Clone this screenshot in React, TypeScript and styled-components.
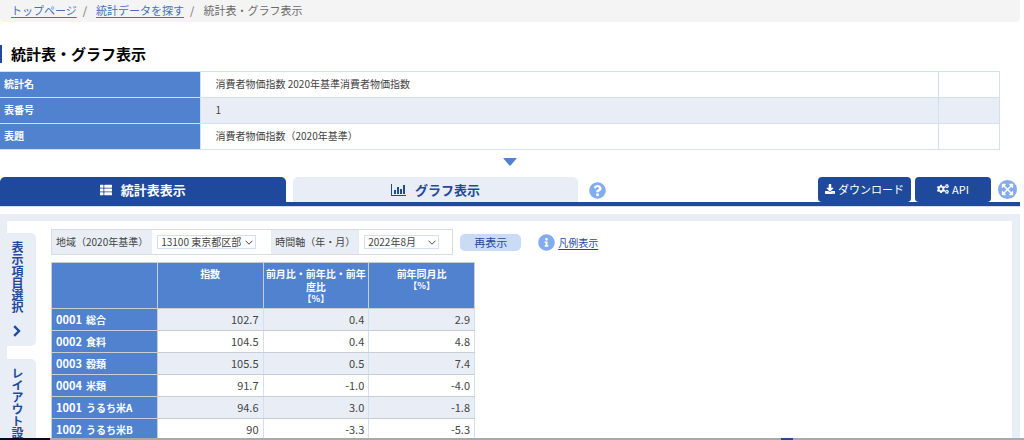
import React from "react";
import styled, { createGlobalStyle } from "styled-components";
import {
  FaThList,
  FaCogs,
  FaDownload,
  FaQuestionCircle,
  FaInfoCircle,
  FaExpandArrowsAlt,
} from "react-icons/fa";

const color = {
  navy: "#1f4a9b",
  link: "#4470bd",
  blue: "#5082d0",
  sky: "#82acec",
  pale: "#e9eef6",
  line: "#d3e0f4",
  grid: "#c9cdd4",
  text: "#444",
};

const GlobalStyle = createGlobalStyle`
  *, *::before, *::after { box-sizing: border-box; }
  body {
    margin: 0;
    background: #fff;
    color: ${color.text};
    font-family: "Noto Sans CJK JP", "Liberation Sans", sans-serif;
    font-size: 10px;
    line-height: 14px;
  }
  button, select { font: inherit; color: inherit; margin: 0; }
`;

const Screen = styled.div`
  display: flex;
  flex-direction: column;
  height: 100vh;
  overflow: hidden;
`;

const Page = styled.main`
  display: flex;
  flex-direction: column;
  flex: 1;
  min-height: 0;
  padding-right: 4px;
  overflow: hidden;
`;

const Breadcrumb = styled.nav`
  flex: none;
  height: 22px;
  padding: 2px 11px 0;
  background: #f4f4f4;
  border-radius: 0 0 4px 4px;
  font-size: 11px;
  line-height: 17px;
  color: #6b6b6b;

  ol {
    display: flex;
    margin: 0;
    padding: 0;
    list-style: none;
  }
  li + li::before {
    content: "/";
    padding: 0 9px 0 6px;
  }
  a {
    color: ${color.link};
    text-underline-offset: 2px;
  }
`;

const Title = styled.h1`
  flex: none;
  margin: 23px 0 8px;
  padding-left: 9px;
  border-left: 2px solid ${color.navy};
  color: #000;
  font-size: 15px;
  font-weight: 700;
  line-height: 18px;
`;

const InfoTable = styled.table`
  flex: none;
  width: calc(100% - 20px);
  border-collapse: collapse;
  table-layout: fixed;

  th,
  td {
    height: 26px;
    padding: 0 15px 2px;
    border: 1px solid ${color.line};
    text-align: left;
  }
  th {
    width: 200px;
    padding: 0 4px 2px;
    border-left: 0;
    background: ${color.blue};
    color: #fff;
  }
  td:last-child {
    width: 61px;
  }
  tr:nth-child(even) td {
    background: ${color.pale};
  }
`;

const Collapse = styled.button`
  flex: none;
  align-self: center;
  display: block;
  height: 27px;
  padding: 0 0 4px;
  border: 0;
  background: none;
  line-height: 0;
`;

const TabBar = styled.div`
  flex: none;
  display: flex;
  align-items: flex-end;
  border-bottom: 4px solid ${color.navy};
  box-shadow: 0 1px 0 ${color.line};
`;

const Tab = styled.button<{ $active?: boolean }>`
  display: flex;
  align-items: center;
  justify-content: center;
  gap: 9px;
  width: 28%;
  height: 25px;
  margin-right: 7px;
  padding: 0;
  border: 0;
  border-radius: 5px 5px 0 0;
  background: ${(p) => (p.$active ? color.navy : color.pale)};
  color: ${(p) => (p.$active ? "#fff" : color.navy)};
  font-size: 13px;
  font-weight: 700;
  line-height: 18px;
`;

const RoundButton = styled.button`
  display: flex;
  margin: 0 4px 3px;
  padding: 0;
  border: 0;
  border-radius: 50%;
  background: none;
  color: ${color.sky};
`;

const Actions = styled.div`
  display: flex;
  align-items: flex-end;
  gap: 4px;
  margin-left: auto;
`;

const ActionButton = styled.button<{ $width: number }>`
  display: flex;
  align-items: center;
  justify-content: center;
  gap: 3px;
  width: ${(p) => p.$width}px;
  height: 25px;
  padding: 0 0 1px;
  border: 0;
  border-radius: 4px;
  background: ${color.navy};
  color: #fff;
  font-size: 11px;
`;

const FullScreen = styled(RoundButton)`
  align-items: center;
  justify-content: center;
  width: 19px;
  height: 19px;
  margin: 0 3px 3px;
  background: ${color.sky};
  color: #fff;
`;

const Panel = styled.section`
  display: flex;
  align-items: flex-start;
  gap: 15px;
  flex: 1;
  margin-top: 8px;
  padding-top: 8px;
  border: solid ${color.pale};
  border-width: 7px 8px 0 7px;
`;

const SideTabs = styled.div`
  display: flex;
  flex-direction: column;
  gap: 13px;
  padding-top: 4px;
`;

const SideTab = styled.button`
  display: flex;
  align-items: center;
  justify-content: space-between;
  width: 29px;
  height: 113px;
  padding: 8px 9px 9px 0;
  border: 0;
  border-radius: 0 5px 5px 0;
  background: ${color.pale};
  color: ${color.navy};
  font-size: 12px;
  font-weight: 700;
  line-height: 20px;
  white-space: nowrap;
  writing-mode: vertical-rl;
`;

const Content = styled.div`
  flex: 1;
`;

const Filters = styled.form`
  display: flex;
  align-items: center;
`;

const FilterBox = styled.div`
  display: flex;
  height: 26px;
  border: 1px solid #d9dbde;
`;

const FilterLabel = styled.label`
  padding: 0 4px;
  background: ${color.pale};
  line-height: 23px;
`;

const SelectWrap = styled.div<{ $width: number; $after: number }>`
  display: grid;
  align-items: center;
  width: ${(p) => p.$width}px;
  margin: 0 ${(p) => p.$after}px 0 5px;

  > * {
    grid-area: 1 / 1;
  }
  svg {
    justify-self: end;
    margin-right: 3px;
    pointer-events: none;
  }
`;

const Select = styled.select`
  width: 100%;
  height: 14px;
  padding: 0 3px;
  border: 1px solid ${color.line};
  border-radius: 0;
  background: #fff;
  line-height: 12px;
  appearance: none;
`;

const Redisplay = styled.button`
  width: 61px;
  height: 17px;
  margin: 0 17px 0 7px;
  padding: 0;
  border: 0;
  border-radius: 5px;
  background: #c9dbf7;
  color: ${color.navy};
  font-size: 11px;
  line-height: 17px;
`;

const Legend = styled.a`
  display: flex;
  align-items: center;
  gap: 3px;
  color: ${color.navy};
  text-decoration: none;

  svg {
    color: ${color.sky};
  }
  span {
    padding-top: 2px;
    text-decoration: underline;
    text-underline-offset: 2px;
  }
`;

const DataTable = styled.table`
  width: 424px;
  margin-top: 7px;
  border-collapse: collapse;
  table-layout: fixed;

  th,
  td {
    height: 22px;
    padding: 0 4px 1px;
    border: 1px solid ${color.grid};
  }
  th {
    background: ${color.blue};
    color: #fff;
    text-align: left;
  }
  thead th {
    height: 46px;
    padding: 4px 2px 0;
    text-align: center;
    vertical-align: top;
    line-height: 13px;
  }
  td {
    border-right-color: ${color.line};
    border-left-color: ${color.line};
    font-size: 11px;
    text-align: right;
  }
  tbody tr:nth-child(odd) td {
    background: ${color.pale};
  }
`;

const Unit = styled.span`
  display: block;
  font-size: 9px;
  line-height: 12px;
`;

const Code = styled.span`
  margin-right: 4px;
  font-size: 11px;
`;

const Dock = styled.footer`
  flex: none;
  display: flex;
  justify-content: space-between;
  height: 2px;
  background: #a9a9a9;
`;

const DockItem = styled.span<{ $tone: string; $width: number }>`
  width: ${(p) => p.$width}px;
  margin-right: ${(p) => (p.$tone === color.navy ? 231 : 0)}px;
  background: ${(p) => p.$tone};
`;

const ChartIcon = () => (
  <svg width="15" height="12" viewBox="0 0 15 12" fill="currentColor" aria-hidden="true">
    <path d="M0 0h1v11h14v1H0zM3 6h2v4H3zM6 3h2v7H6zM9 5h2v5H9zM12 1h2v9h-2z" />
  </svg>
);

const ArrowRight = () => (
  <svg width="8" height="12" viewBox="0 0 8 12" fill="none" stroke="currentColor" strokeWidth="2.4" aria-hidden="true">
    <path d="M1.200 1.200 6 6 1.200 10.800" />
  </svg>
);

const Caret = () => (
  <svg width="8" height="5" viewBox="0 0 8 5" fill="none" stroke="#444" aria-hidden="true">
    <path d="M.5.7 4 4.2 7.5.7" />
  </svg>
);

const info = [
  ["統計名", "消費者物価指数 2020年基準消費者物価指数"],
  ["表番号", "1"],
  ["表題", "消費者物価指数（2020年基準）"],
];

const rows = [
  ["0001", "総合", "102.7", "0.4", "2.9"],
  ["0002", "食料", "104.5", "0.4", "4.8"],
  ["0003", "穀類", "105.5", "0.5", "7.4"],
  ["0004", "米類", "91.7", "-1.0", "-4.0"],
  ["1001", "うるち米A", "94.6", "3.0", "-1.8"],
  ["1002", "うるち米B", "90", "-3.3", "-5.3"],
];

export default function App() {
  return (
    <Screen>
      <GlobalStyle />
      <Page>
        <Breadcrumb>
          <ol>
            <li><a href="#top">トップページ</a></li>
            <li><a href="#search">統計データを探す</a></li>
            <li>統計表・グラフ表示</li>
          </ol>
        </Breadcrumb>
        <Title>統計表・グラフ表示</Title>
        <InfoTable>
          <tbody>
            {info.map(([name, value]) => (
              <tr key={name}>
                <th scope="row">{name}</th>
                <td>{value}</td>
                <td />
              </tr>
            ))}
          </tbody>
        </InfoTable>
        <Collapse type="button" aria-label="詳細を開く">
          <svg width="14" height="8" viewBox="0 0 14 8" fill={color.blue}>
            <path d="M1 0h12q1 0 .4.8L7.800 7.200q-.8.8-1.600 0L.6.800Q0 0 1 0z" />
          </svg>
        </Collapse>
        <TabBar>
          <Tab type="button" $active><FaThList size={12} />統計表表示</Tab>
          <Tab type="button"><ChartIcon />グラフ表示</Tab>
          <RoundButton type="button" aria-label="ヘルプ"><FaQuestionCircle size={17} /></RoundButton>
          <Actions>
            <ActionButton type="button" $width={93}><FaDownload size={10} />ダウンロード</ActionButton>
            <ActionButton type="button" $width={76}><FaCogs size={12} />API</ActionButton>
            <FullScreen type="button" aria-label="全画面表示"><FaExpandArrowsAlt size={13} /></FullScreen>
          </Actions>
        </TabBar>
        <Panel>
          <SideTabs>
            <SideTab type="button">表示項目選択<ArrowRight /></SideTab>
            <SideTab type="button">レイアウト設定</SideTab>
          </SideTabs>
          <Content>
            <Filters>
              <FilterBox>
                <FilterLabel htmlFor="area">地域（2020年基準）</FilterLabel>
                <SelectWrap $width={99} $after={15}>
                  <Select id="area"><option>13100 東京都区部</option></Select>
                  <Caret />
                </SelectWrap>
                <FilterLabel htmlFor="time">時間軸（年・月）</FilterLabel>
                <SelectWrap $width={75} $after={13}>
                  <Select id="time"><option>2022年8月</option></Select>
                  <Caret />
                </SelectWrap>
              </FilterBox>
              <Redisplay type="button">再表示</Redisplay>
              <Legend href="#legend"><FaInfoCircle size={17} /><span>凡例表示</span></Legend>
            </Filters>
            <DataTable>
              <thead>
                <tr>
                  <th scope="col" aria-label="品目" />
                  <th scope="col">指数</th>
                  <th scope="col">前月比・前年比・前年度比<Unit>【%】</Unit></th>
                  <th scope="col">前年同月比<Unit>【%】</Unit></th>
                </tr>
              </thead>
              <tbody>
                {rows.map(([code, name, ...values]) => (
                  <tr key={code}>
                    <th scope="row"><Code>{code}</Code>{name}</th>
                    {values.map((v, i) => <td key={i}>{v}</td>)}
                  </tr>
                ))}
              </tbody>
            </DataTable>
          </Content>
        </Panel>
      </Page>
      <Dock>
        <DockItem $tone="#0d0820" $width={50} />
        <DockItem $tone={color.navy} $width={12} />
      </Dock>
    </Screen>
  );
}
